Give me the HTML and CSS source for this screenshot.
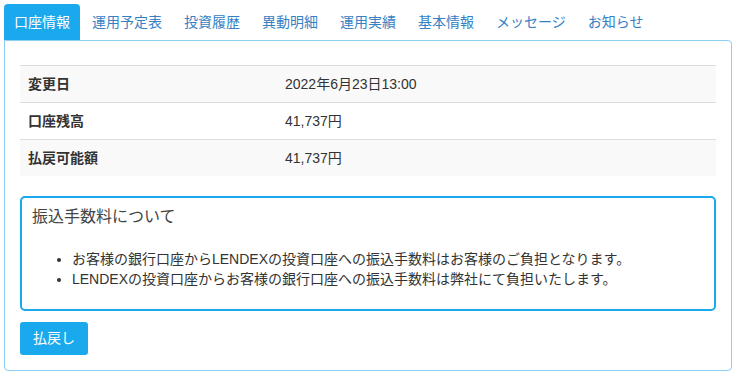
FILE: index.html
```html
<!DOCTYPE html>
<html lang="ja">
<head>
    <meta charset="utf-8">
    <title>口座情報</title>
    <link rel="stylesheet" href="styles.css">
</head>
<body>
    <ul class="tabs">
        <li class="tab active"><a href="#">口座情報</a></li>
        <li class="tab"><a href="#">運用予定表</a></li>
        <li class="tab"><a href="#">投資履歴</a></li>
        <li class="tab"><a href="#">異動明細</a></li>
        <li class="tab"><a href="#">運用実績</a></li>
        <li class="tab"><a href="#">基本情報</a></li>
        <li class="tab"><a href="#">メッセージ</a></li>
        <li class="tab"><a href="#">お知らせ</a></li>
    </ul>
    <div class="panel">
        <table class="info">
            <tr>
                <th>変更日</th>
                <td>2022年6月23日13:00</td>
            </tr>
            <tr>
                <th>口座残高</th>
                <td>41,737円</td>
            </tr>
            <tr>
                <th>払戻可能額</th>
                <td>41,737円</td>
            </tr>
        </table>
        <div class="notice">
            <p class="notice-title">振込手数料について</p>
            <ul>
                <li>お客様の銀行口座からLENDEXの投資口座への振込手数料はお客様のご負担となります。</li>
                <li>LENDEXの投資口座からお客様の銀行口座への振込手数料は弊社にて負担いたします。</li>
            </ul>
        </div>
        <button class="btn">払戻し</button>
    </div>
</body>
</html>
```
FILE: styles.css
```css
body {
    margin: 4px 6px 4px 4px;
    font-family: "Liberation Sans", "Noto Sans CJK JP", sans-serif;
    font-size: 14px;
    color: #333;
    background: #fff;
}

.tabs {
    display: flex;
    list-style: none;
    margin: 0;
    padding: 0;
}

.tab {
    margin-right: 2px;
}

.tab a {
    display: block;
    padding: 8px 10px;
    line-height: 20px;
    color: #3581c4;
    text-decoration: none;
    border-radius: 4px 4px 0 0;
}

.tab.active a {
    background-color: #19a9ec;
    color: #fff;
}

.panel {
    border: 1px solid #8ccff3;
    border-radius: 0 4px 4px 4px;
    padding: 24px 15px 15px;
}

.info {
    width: 100%;
    border-collapse: collapse;
    margin-bottom: 20px;
}

.info th,
.info td {
    padding: 8px;
    line-height: 20px;
    text-align: left;
    border-top: 1px solid #ddd;
}

.info th {
    width: 241px;
    font-weight: bold;
}

.info tr:nth-child(odd) {
    background-color: #f9f9f9;
}

.notice {
    border: 2px solid #19a9ec;
    border-radius: 5px;
    padding: 8px 10px 12px;
    margin-bottom: 11px;
}

.notice-title {
    margin: 0 0 21px;
    font-size: 16px;
    line-height: 22px;
    color: #444;
}

.notice ul {
    margin: 0 0 8px;
    padding-left: 40px;
    line-height: 20px;
}

.btn {
    display: block;
    font-family: inherit;
    font-size: 14px;
    line-height: 21px;
    padding: 6px 13px;
    color: #fff;
    background-color: #19a9ec;
    border: none;
    border-radius: 3px;
}
```
